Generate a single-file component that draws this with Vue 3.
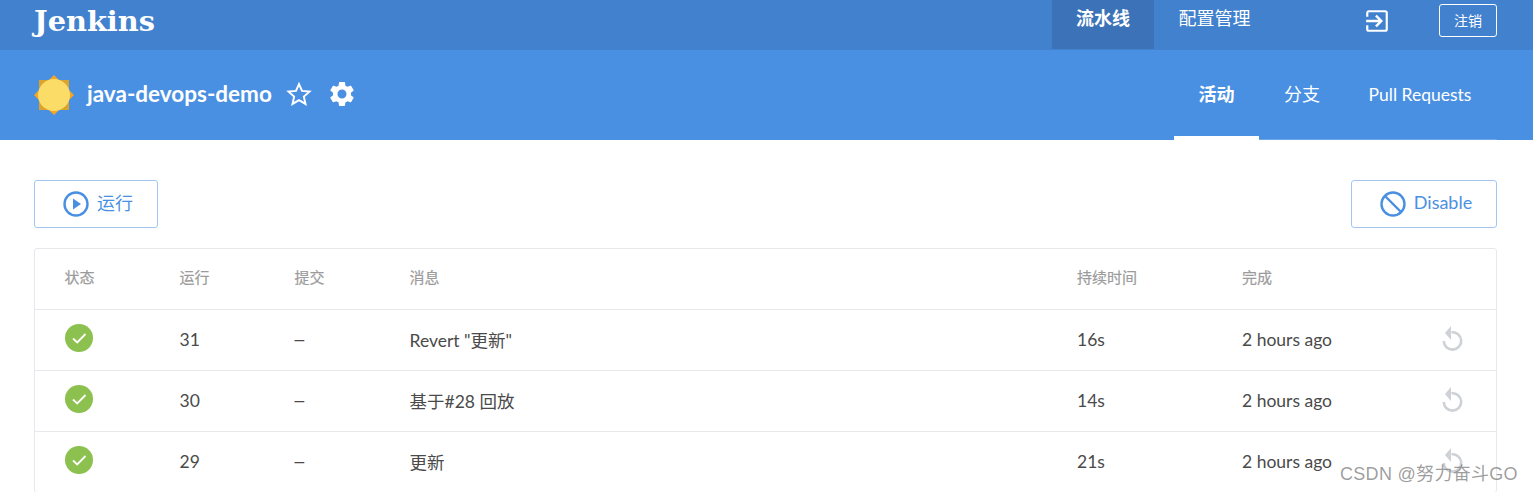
<template>
  <div class="page">
    <header class="topbar">
      <div class="brand">Jenkins</div>
      <nav class="topnav">
        <a class="topnav-item active">流水线</a>
        <a class="topnav-item">配置管理</a>
      </nav>
      <svg class="login-icon" viewBox="0 0 24 24" width="26" height="26">
        <path d="M3 8V4.500A1.500 1.500 0 0 1 4.500 3h15A1.500 1.500 0 0 1 21 4.500v15a1.500 1.500 0 0 1-1.500 1.500h-15A1.500 1.500 0 0 1 3 19.500V16" fill="none" stroke="#fff" stroke-width="2" />
        <path d="M2 12h13M11 7l5 5-5 5" fill="none" stroke="#fff" stroke-width="2.200" />
      </svg>
      <button class="logout">注销</button>
    </header>

    <section class="subbar">
      <svg class="weather" viewBox="0 0 40 40" width="40" height="40">
        <rect x="5" y="5" width="30" height="30" fill="#d9a32e" />
        <path d="M20 0l7 7H13zM20 40l7-7H13zM0 20l7-7v14zM40 20l-7-7v14z" fill="#f5a623" />
        <circle cx="20" cy="20" r="16" fill="#fbdc67" />
      </svg>
      <h1 class="title">java-devops-demo</h1>
      <svg class="star" viewBox="0 0 24 24" width="26" height="26">
        <path d="M12 2.800l2.800 6.300 6.900.7-5.200 4.600 1.500 6.800-6-3.500-6 3.500 1.500-6.800-5.200-4.600 6.900-.7z" fill="none" stroke="#fff" stroke-width="1.800" />
      </svg>
      <svg class="gear" viewBox="0 0 24 24" width="30" height="30">
        <path fill="#fff" d="M19.140 12.940c.04-.3.060-.61.060-.94s-.02-.64-.07-.94l2.030-1.580a.49.490 0 0 0 .12-.61l-1.920-3.320a.49.490 0 0 0-.59-.22l-2.390.96a7 7 0 0 0-1.620-.94l-.36-2.540a.48.480 0 0 0-.48-.41h-3.840a.48.480 0 0 0-.47.410l-.36 2.540a7.200 7.200 0 0 0-1.620.94l-2.390-.96a.48.480 0 0 0-.59.220L2.730 8.870a.48.480 0 0 0 .12.610l2.030 1.580c-.05.300-.09.630-.09.940s.02.640.07.940l-2.030 1.580a.49.490 0 0 0-.12.610l1.920 3.320c.12.220.37.290.59.220l2.390-.96c.5.380 1.030.7 1.620.94l.36 2.540c.05.240.24.410.48.410h3.840c.24 0 .44-.17.47-.41l.36-2.540a6.900 6.900 0 0 0 1.620-.94l2.390.96c.22.080.47 0 .59-.22l1.920-3.320a.48.480 0 0 0-.12-.61zM12 15.600A3.600 3.600 0 1 1 12 8.400a3.600 3.600 0 0 1 0 7.200z" />
      </svg>
      <nav class="tabs">
        <a class="tab active">活动</a>
        <a class="tab">分支</a>
        <a class="tab">Pull Requests</a>
      </nav>
    </section>

    <main class="content">
      <div class="actions">
        <button class="action run">
          <svg viewBox="0 0 26 26" width="26" height="26">
            <circle cx="13" cy="13" r="11.500" fill="none" stroke="#4a90e2" stroke-width="2.400" />
            <path d="M10 7.500l8 5.500-8 5.500z" fill="#4a90e2" />
          </svg>
          <span>运行</span>
        </button>
        <button class="action disable">
          <svg viewBox="0 0 26 26" width="26" height="26">
            <circle cx="13" cy="13" r="11.500" fill="none" stroke="#4a90e2" stroke-width="2.400" />
            <path d="M5 5l16 16" stroke="#4a90e2" stroke-width="2.400" />
          </svg>
          <span>Disable</span>
        </button>
      </div>

      <div class="table">
        <div class="row head">
          <div v-for="col in columns" :key="col">{{ col }}</div>
          <div></div>
        </div>
        <div v-for="run in runs" :key="run.id" class="row">
          <div>
            <svg class="status" viewBox="0 0 28 28" width="28" height="28">
              <circle cx="14" cy="14" r="14" fill="#8cc04f" />
              <path d="M8 14.500l4.200 4L20.500 10" fill="none" stroke="#fff" stroke-width="1.800" />
            </svg>
          </div>
          <div class="cell">{{ run.id }}</div>
          <div class="cell dash">–</div>
          <div class="cell">{{ run.message }}</div>
          <div class="cell">{{ run.duration }}</div>
          <div class="cell">2 hours ago</div>
          <div class="replay-cell">
            <svg viewBox="0 -3 24 27" width="24" height="27">
              <path d="M12.500 3.300A8.700 8.700 0 1 1 4.800 12" fill="none" stroke="#ced2d6" stroke-width="2.600" />
              <path d="M12 -3v14L6 4z" fill="#ced2d6" />
            </svg>
          </div>
        </div>
      </div>
    </main>

    <div class="watermark">CSDN @努力奋斗GO</div>
  </div>
</template>

<script setup>
const columns = ["状态", "运行", "提交", "消息", "持续时间", "完成"];

const runs = [
  { id: 31, message: 'Revert "更新"', duration: "16s" },
  { id: 30, message: "基于#28 回放", duration: "14s" },
  { id: 29, message: "更新", duration: "21s" },
];
</script>

<style>
html,
body {
  margin: 0;
  height: 100%;
  overflow: hidden;
  background: #fff;
}
</style>

<style scoped>
.page {
  position: relative;
  width: 1533px;
  height: 492px;
  overflow: hidden;
  font-family: Lato, "Noto Sans CJK SC", sans-serif;
  color: #4a4a4a;
}

.topbar {
  display: flex;
  align-items: center;
  height: 50px;
  padding: 0 36px 0 34px;
  background: #4281cd;
  color: #fff;
}

.brand {
  margin-top: -9px;
  font-family: "DejaVu Serif", serif;
  font-size: 28.8px;
  font-weight: 700;
}

.topnav {
  display: flex;
  align-self: stretch;
  margin-left: auto;
}

.topnav-item {
  display: flex;
  align-items: center;
  justify-content: center;
  height: 49px;
  padding-bottom: 16px;
  box-sizing: border-box;
  font-size: 18px;
}

.topnav-item.active {
  width: 102px;
  background: #3c73b8;
  font-weight: 700;
}

.topnav-item:not(.active) {
  width: 121px;
}

.login-icon {
  margin: -9px 49px 0 89px;
}

.logout {
  width: 58px;
  height: 33px;
  margin-top: -10px;
  padding: 0;
  border: 1px solid #fff;
  border-radius: 3px;
  background: transparent;
  color: #fff;
  font-family: inherit;
  font-size: 14px;
}

.subbar {
  display: flex;
  align-items: center;
  height: 90px;
  padding: 0 36px 0 34px;
  background: #4a90e2;
  color: #fff;
}

.weather {
  flex: none;
}

.title {
  margin: -3px 0 0 13px;
  font-size: 22.5px;
  font-weight: 700;
}

.star {
  margin: -3px 0 0 14px;
}

.gear {
  margin: -3px 0 0 15px;
}

.tabs {
  display: flex;
  align-self: flex-end;
  margin-left: auto;
  height: 90px;
  border-bottom: 1px solid #6fa6e8;
  box-sizing: border-box;
}

.tab {
  display: flex;
  align-items: center;
  justify-content: center;
  height: 90px;
  padding-bottom: 1px;
  box-sizing: border-box;
  font-size: 17.5px;
}

.tab:nth-child(1) {
  width: 85px;
  border-bottom: 4px solid #fff;
  font-size: 18px;
  font-weight: 700;
}

.tab:nth-child(2) {
  width: 86px;
  padding-bottom: 4px;
  font-size: 18px;
}

.tab:nth-child(3) {
  width: 152px;
  padding-right: 2px;
}

.content {
  padding: 40px 36px 0 34px;
}

.actions {
  display: flex;
  justify-content: space-between;
}

.action {
  display: flex;
  align-items: center;
  justify-content: center;
  gap: 8px;
  height: 48px;
  padding: 0 0 0 4px;
  border: 1px solid #a2c6f0;
  border-radius: 3px;
  background: #fff;
  color: #4a90e2;
  font-family: inherit;
  font-size: 18px;
}

.action span {
  margin-top: -4px;
}

.run {
  width: 124px;
}

.disable {
  width: 146px;
}

.table {
  margin-top: 20px;
  border: 1px solid #e6e8ec;
  border-radius: 3px;
}

.row {
  display: grid;
  grid-template-columns: 115px 115px 115px 667.500px 165px 1fr 57px;
  align-items: center;
  height: 60px;
  padding-left: 29.500px;
  border-top: 1px solid #e6e8ec;
  font-size: 17.5px;
}

.cell {
  margin-top: -2px;
}

.dash {
  font-family: "Liberation Sans", sans-serif;
}

.row.head {
  border-top: 0;
  font-size: 15px;
  color: #9b9b9b;
  -webkit-text-stroke: 0.2px #9b9b9b;
}

.row.head > div {
  margin-top: -5px;
}

.status {
  display: block;
  margin-top: -4px;
}

.replay-cell {
  display: flex;
  margin-top: -2px;
}

.watermark {
  position: absolute;
  left: 1340px;
  top: 459px;
  font-family: "Liberation Sans", "Noto Sans CJK SC", sans-serif;
  font-size: 18px;
  letter-spacing: 0.3px;
  color: rgba(120, 120, 120, 0.72);
}
</style>
